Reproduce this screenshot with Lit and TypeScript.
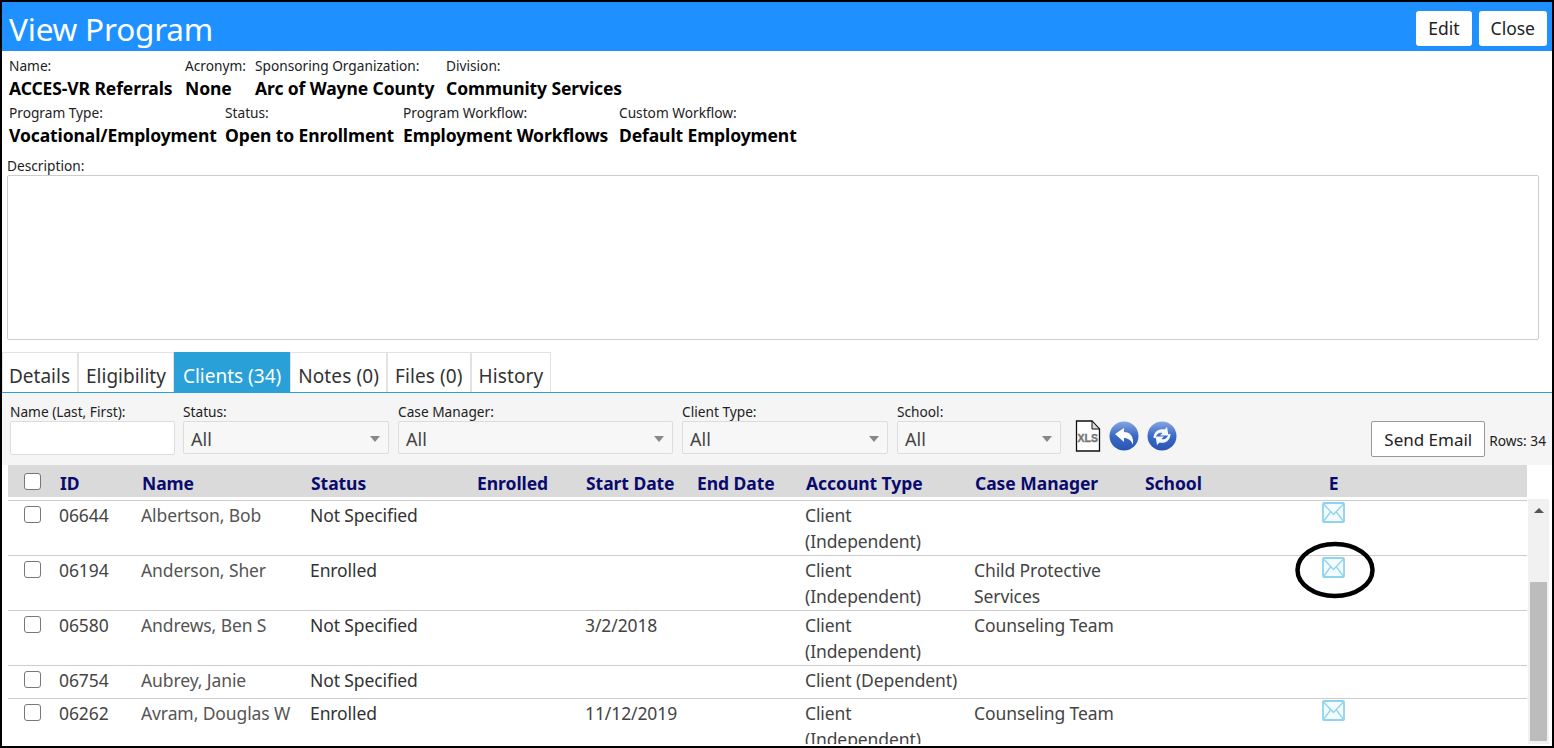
import { LitElement, html, css, svg } from "lit";
import { customElement, state } from "lit/decorators.js";

type ClientRow = {
  id: string;
  name: string;
  status: string;
  start: string;
  account: string[];
  manager: string[];
  email: boolean;
};

const envelope = svg`
  <svg class="mail" width="23" height="21" viewBox="0 0 23 21" fill="none">
    <rect x="1" y="1" width="21" height="19" rx="1" stroke="#8fd3ee" stroke-width="1.8" fill="#f4fbfe"/>
    <path d="M1.500 2l10 10.500L21.500 2M1.500 19.500l7-9.500M21.500 19.500l-7-9.500" stroke="#8fd3ee" stroke-width="1.300"/>
  </svg>
`;

@customElement("app-root")
export class AppRoot extends LitElement {
  @state()
  rows: ClientRow[] = [
    { id: "06644", name: "Albertson, Bob", status: "Not Specified", start: "", account: ["Client", "(Independent)"], manager: [], email: true },
    { id: "06194", name: "Anderson, Sher", status: "Enrolled", start: "", account: ["Client", "(Independent)"], manager: ["Child Protective", "Services"], email: true },
    { id: "06580", name: "Andrews, Ben S", status: "Not Specified", start: "3/2/2018", account: ["Client", "(Independent)"], manager: ["Counseling Team"], email: false },
    { id: "06754", name: "Aubrey, Janie", status: "Not Specified", start: "", account: ["Client (Dependent)"], manager: [], email: false },
    { id: "06262", name: "Avram, Douglas W", status: "Enrolled", start: "11/12/2019", account: ["Client", "(Independent)"], manager: ["Counseling Team"], email: true },
  ];

  tabs = ["Details", "Eligibility", "Clients (34)", "Notes (0)", "Files (0)", "History"];

  static styles = css`
    :host {
      display: block;
      position: relative;
      box-sizing: border-box;
      height: 748px;
      overflow: hidden;
      border: 2px solid #000;
      background: #fff;
      font-family: "Noto Sans", "Open Sans", sans-serif;
      color: #111;
    }

    .title-bar {
      display: flex;
      justify-content: space-between;
      align-items: center;
      height: 49px;
      padding: 0 5px 0 7px;
      background: #1e90ff;
    }

    .title-bar h1 {
      margin: 0;
      padding-top: 3px;
      font-size: 31.5px;
      font-weight: 400;
      color: #fff;
      letter-spacing: -0.2px;
    }

    .title-actions {
      display: flex;
      gap: 7px;
      margin-top: 3px;
    }

    .btn {
      height: 35px;
      padding: 0 12px;
      border: none;
      border-radius: 3px;
      background: #fff;
      font: inherit;
      font-size: 17.5px;
      color: #222;
    }

    .info {
      padding: 5px 7px 0;
    }

    .info-row {
      display: grid;
      height: 46px;
      margin-bottom: 1px;
    }

    .row-a {
      grid-template-columns: 176px 70px 191px auto;
    }

    .row-b {
      grid-template-columns: 216px 178px 216px auto;
    }

    .field label {
      display: block;
      height: 21px;
      font-size: 13.7px;
      line-height: 20px;
      color: #222;
    }

    .field strong {
      display: block;
      font-size: 17.5px;
      line-height: 23px;
      font-weight: 700;
      color: #000;
      white-space: nowrap;
      letter-spacing: -0.1px;
    }

    .desc-label {
      margin: 7px 0 0 -2px;
      font-size: 13.7px;
      line-height: 19px;
      color: #222;
    }

    .desc-box {
      height: 163px;
      margin: 0 6px 0 -2px;
      border: 1px solid #ccc;
      border-radius: 2px;
    }

    .tabs {
      display: flex;
      height: 40px;
      margin-top: 12px;
      border-bottom: 1px solid #29a0d8;
    }

    .tab {
      display: flex;
      align-items: center;
      padding: 7px 7px 0;
      border: 1px solid #e2e2e2;
      border-bottom: none;
      font-size: 19px;
      color: #333;
      white-space: nowrap;
    }

    .tab:first-child {
      padding-left: 6px;
      border-left: 1px solid #e2e2e2;
    }

    .tab.active {
      padding: 7px 8px 0;
      background: #29a0d8;
      border-color: #29a0d8;
      color: #fff;
    }

    .tab.active ~ .tab {
      letter-spacing: 0.1px;
    }

    .filters {
      display: flex;
      align-items: flex-start;
      height: 72px;
      padding: 10px 0 0 8px;
      background: #f5f5f5;
      box-sizing: border-box;
    }

    .filter {
      margin-right: 8px;
    }

    .filter label {
      display: block;
      height: 18px;
      font-size: 13.7px;
      line-height: 18px;
      color: #222;
    }

    .w-name { width: 165px; }
    .w-status { width: 207px; }
    .w-manager { width: 276px; }
    .w-type { width: 207px; }
    .w-school { width: 165px; }

    .input,
    .select {
      box-sizing: border-box;
      height: 34px;
      border: 1px solid #ddd;
      border-radius: 2px;
      background: #fff;
    }

    .select {
      display: flex;
      justify-content: space-between;
      align-items: center;
      padding: 2px 8px 0 7px;
      height: 33px;
      margin-right: 1px;
      background: #f7f7f7;
      font-size: 18px;
      color: #444;
    }

    .caret {
      width: 0;
      height: 0;
      border: 5.500px solid transparent;
      border-top: 6px solid #888;
      border-bottom: none;
    }

    .tools {
      display: flex;
      align-items: center;
      gap: 8px;
      margin: 17px 0 0 5px;
    }

    .send-wrap {
      display: flex;
      align-items: flex-end;
      margin-left: auto;
      margin-top: 18px;
    }

    .send {
      box-sizing: border-box;
      height: 36px;
      padding: 0 12px;
      border: 1px solid #999;
      border-radius: 2px;
      background: #fff;
      font: inherit;
      font-size: 17px;
      color: #222;
    }

    .rows-count {
      margin: 0 6px 7px 4px;
      font-size: 13.7px;
      color: #222;
    }

    .grid-head,
    .grid-row {
      display: grid;
      grid-template-columns: 51px 82px 169px 166px 109px 111px 109px 169px 170px 140px 98px;
    }

    .table {
      margin-left: 6px;
      position: relative;
    }

    .grid-head {
      box-sizing: border-box;
      width: 1519px;
      height: 32px;
      padding-top: 3px;
      align-items: center;
      background: #dadada;
      font-size: 17.5px;
      font-weight: 700;
      color: #0a0a6e;
      letter-spacing: -0.05px;
    }

    .grid-head span {
      padding-left: 1px;
    }

    .grid-head .box {
      padding-left: 0;
    }

    .grid-head .center,
    .grid-row .center {
      text-align: center;
    }

    .check {
      box-sizing: border-box;
      display: block;
      width: 17px;
      height: 17px;
      margin-left: 16px;
      border: 1px solid #777;
      border-radius: 3px;
      background: #fff;
    }

    .grid-head .check {
      margin-top: -3px;
    }

    .body {
      display: flex;
      height: 247px;
      overflow: hidden;
    }

    .rows {
      width: 1519px;
      padding-top: 3px;
    }

    .grid-row {
      border-top: 1px solid #ccc;
      padding: 1px 0 0;
      font-size: 17.5px;
      line-height: 26px;
      color: #444;
      box-sizing: border-box;
      height: 55px;
      letter-spacing: -0.1px;
    }

    .grid-row.short {
      height: 33px;
    }

    .grid-row .check {
      margin-top: 4px;
    }

    .grid-row .mail {
      display: block;
      margin: 0 auto;
    }

    .grid-row .person {
      color: #555;
    }

    .grid-row .status {
      color: #333;
    }

    .scrollbar {
      flex: none;
      width: 21px;
      margin: 2px 0 0 1px;
      background: #f1f1f1;
      overflow: hidden;
    }

    .scroll-up {
      width: 0;
      height: 0;
      margin: 9px auto 0;
      border: 5px solid transparent;
      border-bottom: 5px solid #555;
      border-top: none;
    }

    .scroll-thumb {
      width: 17px;
      height: 159px;
      margin: 69px auto 0;
      background: #bcbcbc;
    }

    .annotation {
      position: absolute;
      left: 1292px;
      top: 539px;
      pointer-events: none;
    }
  `;

  renderXls() {
    return html`
      <svg width="26" height="32" viewBox="0 0 26 32">
        <path d="M1.500 1H17l7.500 8v22H1.500z" fill="#fff" stroke="#111" stroke-width="1.300"/>
        <path d="M17 1v8h7.500z" fill="#ddd" stroke="#111" stroke-width="1"/>
        <text x="2.500" y="22" font-family="Liberation Sans, sans-serif" font-size="10.500" font-weight="700" fill="#777" stroke="#777" stroke-width="0.400">XLS</text>
      </svg>
    `;
  }

  renderRound(kind: "back" | "refresh") {
    const arrows =
      kind === "back"
        ? svg`<path d="M6 13l9-6v4c6 0 10 4 9 13-2-5-5-7-9-7v4z" fill="#fff"/>`
        : svg`
            <path d="M6.500 17c0-6 5-10 11-8.500l2.500-2.500 1.500 8.500-8.500 0 2.500-2.500c-3.500-1-6 1-7 5z" fill="#fff" opacity="0.95"/>
            <path d="M23.500 13c0 6-5 10-11 8.500l-2.500 2.500-1.500-8.500 8.500 0-2.500 2.500c3.500 1 6-1 7-5z" fill="#fff" opacity="0.95"/>
          `;
    return html`
      <svg width="30" height="30" viewBox="0 0 30 30">
        <defs>
          <linearGradient id="orb-${kind}" x1="0" y1="0" x2="0" y2="1">
            <stop offset="0" stop-color="#86a6e2"/>
            <stop offset="0.500" stop-color="#3b69c6"/>
            <stop offset="1" stop-color="#2a56b2"/>
          </linearGradient>
        </defs>
        <circle cx="15" cy="15" r="14.500" fill="url(#orb-${kind})"/>
        ${arrows}
      </svg>
    `;
  }

  renderFilter(label: string, width: string) {
    return html`
      <div class="filter ${width}">
        <label>${label}</label>
        <div class="select">All<span class="caret"></span></div>
      </div>
    `;
  }

  render() {
    return html`
      <div class="title-bar">
        <h1>View Program</h1>
        <div class="title-actions">
          <button class="btn">Edit</button>
          <button class="btn">Close</button>
        </div>
      </div>

      <div class="info">
        <div class="info-row row-a">
          <div class="field"><label>Name:</label><strong>ACCES-VR Referrals</strong></div>
          <div class="field"><label>Acronym:</label><strong>None</strong></div>
          <div class="field"><label>Sponsoring Organization:</label><strong>Arc of Wayne County</strong></div>
          <div class="field"><label>Division:</label><strong>Community Services</strong></div>
        </div>
        <div class="info-row row-b">
          <div class="field"><label>Program Type:</label><strong>Vocational/Employment</strong></div>
          <div class="field"><label>Status:</label><strong>Open to Enrollment</strong></div>
          <div class="field"><label>Program Workflow:</label><strong>Employment Workflows</strong></div>
          <div class="field"><label>Custom Workflow:</label><strong>Default Employment</strong></div>
        </div>
        <div class="desc-label">Description:</div>
        <div class="desc-box"></div>
      </div>

      <div class="tabs">
        ${this.tabs.map(
          (tab) => html`<div class="tab ${tab.startsWith("Clients") ? "active" : ""}">${tab}</div>`
        )}
      </div>

      <div class="filters">
        <div class="filter w-name">
          <label>Name (Last, First):</label>
          <div class="input"></div>
        </div>
        ${this.renderFilter("Status:", "w-status")}
        ${this.renderFilter("Case Manager:", "w-manager")}
        ${this.renderFilter("Client Type:", "w-type")}
        ${this.renderFilter("School:", "w-school")}
        <div class="tools">
          ${this.renderXls()} ${this.renderRound("back")} ${this.renderRound("refresh")}
        </div>
        <div class="send-wrap">
          <button class="send">Send Email</button>
          <span class="rows-count">Rows: 34</span>
        </div>
      </div>

      <div class="table">
        <div class="grid-head">
          <span class="box"><i class="check"></i></span>
          <span>ID</span>
          <span>Name</span>
          <span>Status</span>
          <span>Enrolled</span>
          <span>Start Date</span>
          <span>End Date</span>
          <span>Account Type</span>
          <span>Case Manager</span>
          <span>School</span>
          <span class="center">E</span>
        </div>
        <div class="body">
          <div class="rows">
            ${this.rows.map(
              (row) => html`
                <div class="grid-row ${row.account.length === 1 && row.manager.length === 0 ? "short" : ""}">
                  <span><i class="check"></i></span>
                  <span>${row.id}</span>
                  <span class="person">${row.name}</span>
                  <span class="status">${row.status}</span>
                  <span></span>
                  <span>${row.start}</span>
                  <span></span>
                  <span>${row.account.map((line) => html`<div>${line}</div>`)}</span>
                  <span>${row.manager.map((line) => html`<div>${line}</div>`)}</span>
                  <span></span>
                  <span class="center">${row.email ? envelope : ""}</span>
                </div>
              `
            )}
          </div>
          <div class="scrollbar">
            <div class="scroll-up"></div>
            <div class="scroll-thumb"></div>
          </div>
        </div>
      </div>

      <svg class="annotation" width="84" height="62" viewBox="0 0 84 62">
        <ellipse cx="41" cy="29" rx="37.500" ry="26" fill="none" stroke="#000" stroke-width="4.500"/>
      </svg>
    `;
  }
}

declare global {
  interface HTMLElementTagNameMap {
    "app-root": AppRoot;
  }
}
